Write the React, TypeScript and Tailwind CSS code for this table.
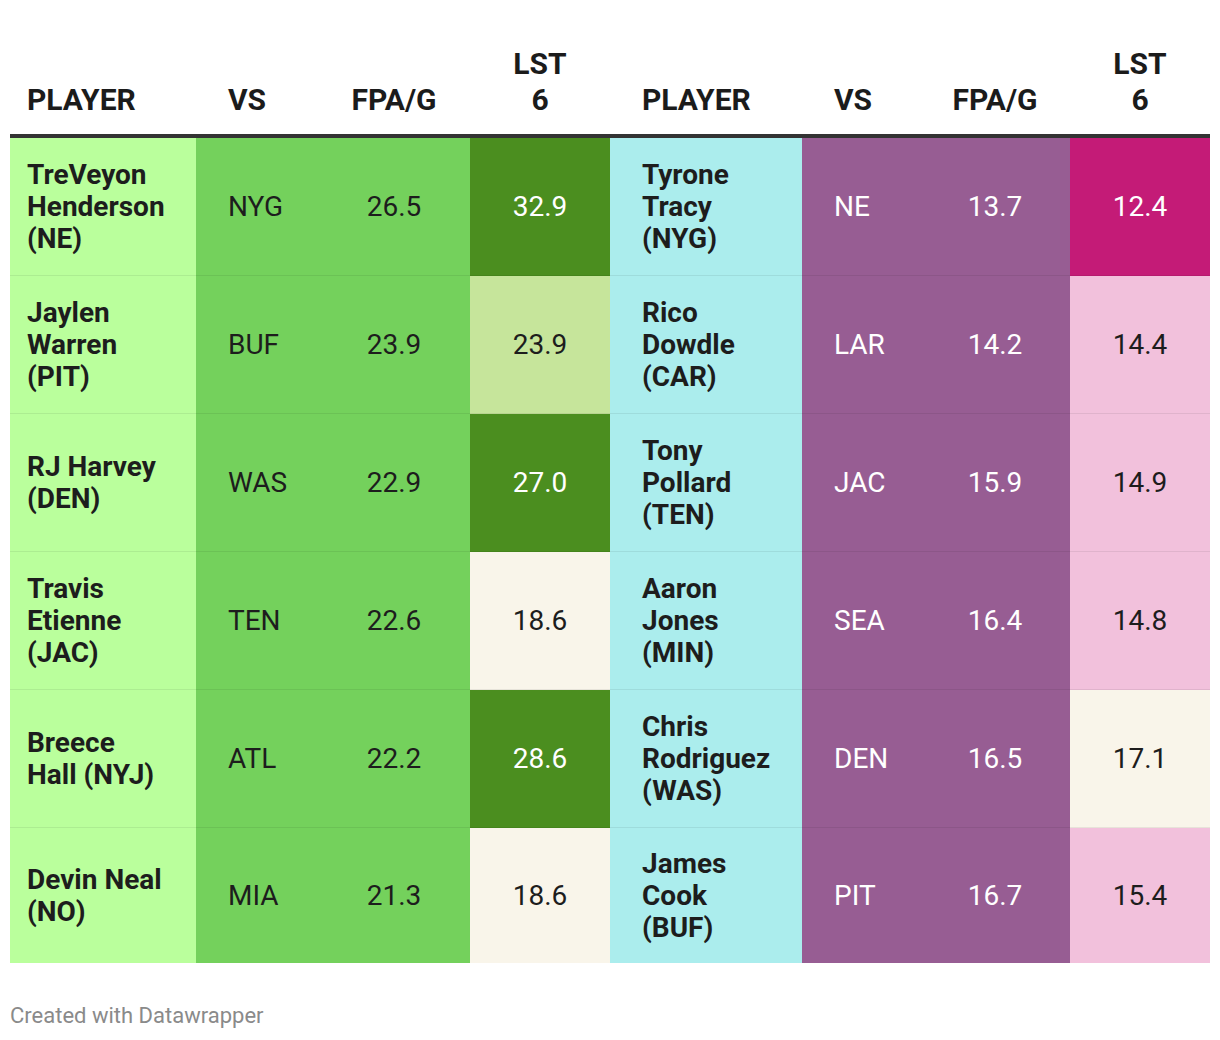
type Side = {
  name: string[];
  vs: string;
  fpa: string;
  lst: string;
  lstBg: string;
  lstText: string;
};

const GREEN_DARK = "bg-[#4b8e1f]";
const GREEN_PALE = "bg-[#c6e59b]";
const CREAM = "bg-[#f9f5ea]";
const MAGENTA = "bg-[#c41b77]";
const PINK = "bg-[#f2c1dc]";

const left: Side[] = [
  { name: ["TreVeyon", "Henderson", "(NE)"], vs: "NYG", fpa: "26.5", lst: "32.9", lstBg: GREEN_DARK, lstText: "text-white" },
  { name: ["Jaylen", "Warren", "(PIT)"], vs: "BUF", fpa: "23.9", lst: "23.9", lstBg: GREEN_PALE, lstText: "text-[#1d1d1d]" },
  { name: ["RJ Harvey", "(DEN)"], vs: "WAS", fpa: "22.9", lst: "27.0", lstBg: GREEN_DARK, lstText: "text-white" },
  { name: ["Travis", "Etienne", "(JAC)"], vs: "TEN", fpa: "22.6", lst: "18.6", lstBg: CREAM, lstText: "text-[#1d1d1d]" },
  { name: ["Breece", "Hall (NYJ)"], vs: "ATL", fpa: "22.2", lst: "28.6", lstBg: GREEN_DARK, lstText: "text-white" },
  { name: ["Devin Neal", "(NO)"], vs: "MIA", fpa: "21.3", lst: "18.6", lstBg: CREAM, lstText: "text-[#1d1d1d]" },
];

const right: Side[] = [
  { name: ["Tyrone", "Tracy", "(NYG)"], vs: "NE", fpa: "13.7", lst: "12.4", lstBg: MAGENTA, lstText: "text-white" },
  { name: ["Rico", "Dowdle", "(CAR)"], vs: "LAR", fpa: "14.2", lst: "14.4", lstBg: PINK, lstText: "text-[#1d1d1d]" },
  { name: ["Tony", "Pollard", "(TEN)"], vs: "JAC", fpa: "15.9", lst: "14.9", lstBg: PINK, lstText: "text-[#1d1d1d]" },
  { name: ["Aaron", "Jones", "(MIN)"], vs: "SEA", fpa: "16.4", lst: "14.8", lstBg: PINK, lstText: "text-[#1d1d1d]" },
  { name: ["Chris", "Rodriguez", "(WAS)"], vs: "DEN", fpa: "16.5", lst: "17.1", lstBg: CREAM, lstText: "text-[#1d1d1d]" },
  { name: ["James", "Cook", "(BUF)"], vs: "PIT", fpa: "16.7", lst: "15.4", lstBg: PINK, lstText: "text-[#1d1d1d]" },
];

function HeaderCells({ first }: { first: boolean }) {
  return (
    <>
      <div className={`flex items-end pb-[16px] ${first ? "pl-[17px]" : "pl-[32px]"}`}>PLAYER</div>
      <div className="flex items-end pb-[16px] pl-[32px]">VS</div>
      <div className="flex items-end justify-center pb-[16px]">FPA/G</div>
      <div className="flex flex-col items-center justify-end pb-[16px]">
        <span>LST</span>
        <span>6</span>
      </div>
    </>
  );
}

function RowCells({ s, first, last, rightSide }: { s: Side; first: boolean; last: boolean; rightSide: boolean }) {
  const line = last ? "" : "border-b border-black/[0.07]";
  const playerBg = rightSide ? "bg-[#abeded]" : "bg-[#baff9c]";
  const midBg = rightSide ? "bg-[#975d93] text-white" : "bg-[#74d15c] text-[#1d1d1d]";
  return (
    <>
      <div className={`flex flex-col justify-center font-bold text-[#1d1d1d] ${first ? "pl-[17px]" : "pl-[32px]"} ${playerBg} ${line}`}>
        {s.name.map((n) => (
          <span key={n} className="whitespace-nowrap">{n}</span>
        ))}
      </div>
      <div className={`flex items-center pl-[32px] ${midBg} ${line}`}>{s.vs}</div>
      <div className={`flex items-center justify-center ${midBg} ${line}`}>{s.fpa}</div>
      <div className={`flex items-center justify-center ${s.lstBg} ${s.lstText} ${line}`}>{s.lst}</div>
    </>
  );
}

export default function App() {
  return (
    <div className="min-h-[1040px] w-[1220px] bg-white px-[10px] pt-[46px] font-['Roboto',sans-serif]">
      <div className="grid grid-cols-[186px_122px_152px_140px_192px_118px_150px_140px] border-b-4 border-[#333333] text-[30px] font-bold leading-[36px] text-[#1b1b1b]">
        <HeaderCells first />
        <HeaderCells first={false} />
      </div>
      <div className="grid grid-cols-[186px_122px_152px_140px_192px_118px_150px_140px] text-[28px] leading-[32px] text-[#1d1d1d]">
        {left.map((l, i) => {
          const last = i === left.length - 1;
          return (
            <div key={i} className="contents">
              <div className={`col-span-4 grid grid-cols-[186px_122px_152px_140px] ${last ? "h-[135px]" : "h-[138px]"}`}>
                <RowCells s={l} first last={last} rightSide={false} />
              </div>
              <div className={`col-span-4 grid grid-cols-[192px_118px_150px_140px] ${last ? "h-[135px]" : "h-[138px]"}`}>
                <RowCells s={right[i]} first={false} last={last} rightSide />
              </div>
            </div>
          );
        })}
      </div>
      <div className="mt-[40px] text-[22px] leading-[26px] text-[#8a8a8a]">Created with Datawrapper</div>
    </div>
  );
}
